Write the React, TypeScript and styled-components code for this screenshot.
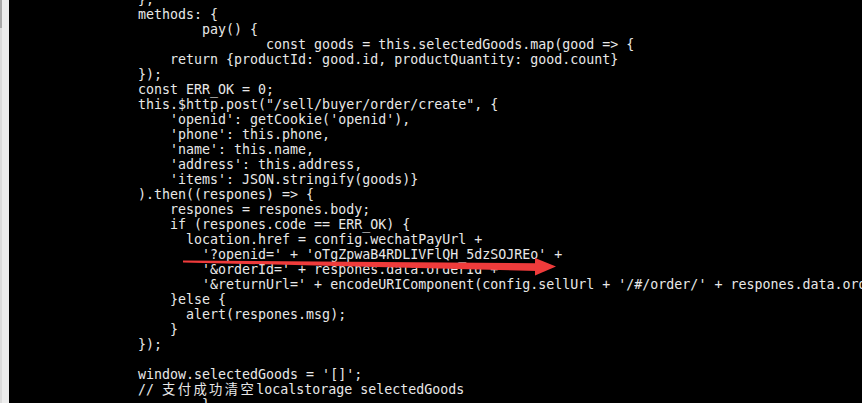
import React, {FC} from "react";
import styled, {createGlobalStyle} from "styled-components";

const Global = createGlobalStyle`
  html, body, #root {
    margin: 0;
    height: 100%;
    overflow: hidden;
    background: #000;
  }
`

const Window = styled.div`
  position: relative;
  display: flex;
  height: 403px;
  width: 862px;
  overflow: hidden;
`

const Edge = styled.div`
  width: 7px;
  flex: none;
  background: #ededed;
  border-left: 2px solid #dcdcdc;
  position: relative;
`

const Thumb = styled.div`
  position: absolute;
  left: -2px;
  top: 0;
  width: 2px;
  height: 28px;
  background: #a9a9a9;
`

const Console = styled.div`
  flex: 1;
  background: #000;
  padding-left: 129px;
  overflow: hidden;
`

const Code = styled.div`
  margin-top: -7.6px;
  font-family: "DejaVu Sans Mono", "Noto Sans CJK SC", monospace;
  font-size: 13.3px;
  line-height: 15px;
  color: #e8e8e8;
`

const Line = styled.div`
  white-space: pre;
  height: 15px;
`

const Wide = styled.span`
  letter-spacing: 2.4px;
`

const Arrow = styled.svg`
  position: absolute;
  left: 0;
  top: 0;
  pointer-events: none;
`

const lines: string[] = [
    "},",
    "methods: {",
    "        pay() {",
    "                const goods = this.selectedGoods.map(good => {",
    "    return {productId: good.id, productQuantity: good.count}",
    "});",
    "const ERR_OK = 0;",
    "this.$http.post(\"/sell/buyer/order/create\", {",
    "    'openid': getCookie('openid'),",
    "    'phone': this.phone,",
    "    'name': this.name,",
    "    'address': this.address,",
    "    'items': JSON.stringify(goods)}",
    ").then((respones) => {",
    "    respones = respones.body;",
    "    if (respones.code == ERR_OK) {",
    "      location.href = config.wechatPayUrl +",
    "        '?openid=' + 'oTgZpwaB4RDLIVFlQH_5dzSOJREo' +",
    "        '&orderId=' + respones.data.orderId +",
    "        '&returnUrl=' + encodeURIComponent(config.sellUrl + '/#/order/' + respones.data.orderId)",
    "    }else {",
    "      alert(respones.msg);",
    "    }",
    "});",
    "",
    "window.selectedGoods = '[]';",
]

const App: FC = () => {
    return <Window>
        <Global/>
        <Edge><Thumb/></Edge>
        <Console>
            <Code>
                {lines.map((l, i) => <Line key={i}>{l}</Line>)}
                <Line>// <Wide>支付成功清空</Wide>localstorage selectedGoods</Line>
                <Line>        {"}"}</Line>
            </Code>
        </Console>
        <Arrow width="862" height="403" viewBox="0 0 862 403">
            <polygon points="183,260.4 537,263.2 537,271 183,262.4" fill="#ef3b3b"/>
            <polygon points="535,258 556,266.5 535,275.5" fill="#ef3b3b"/>
        </Arrow>
    </Window>
}

export default App
